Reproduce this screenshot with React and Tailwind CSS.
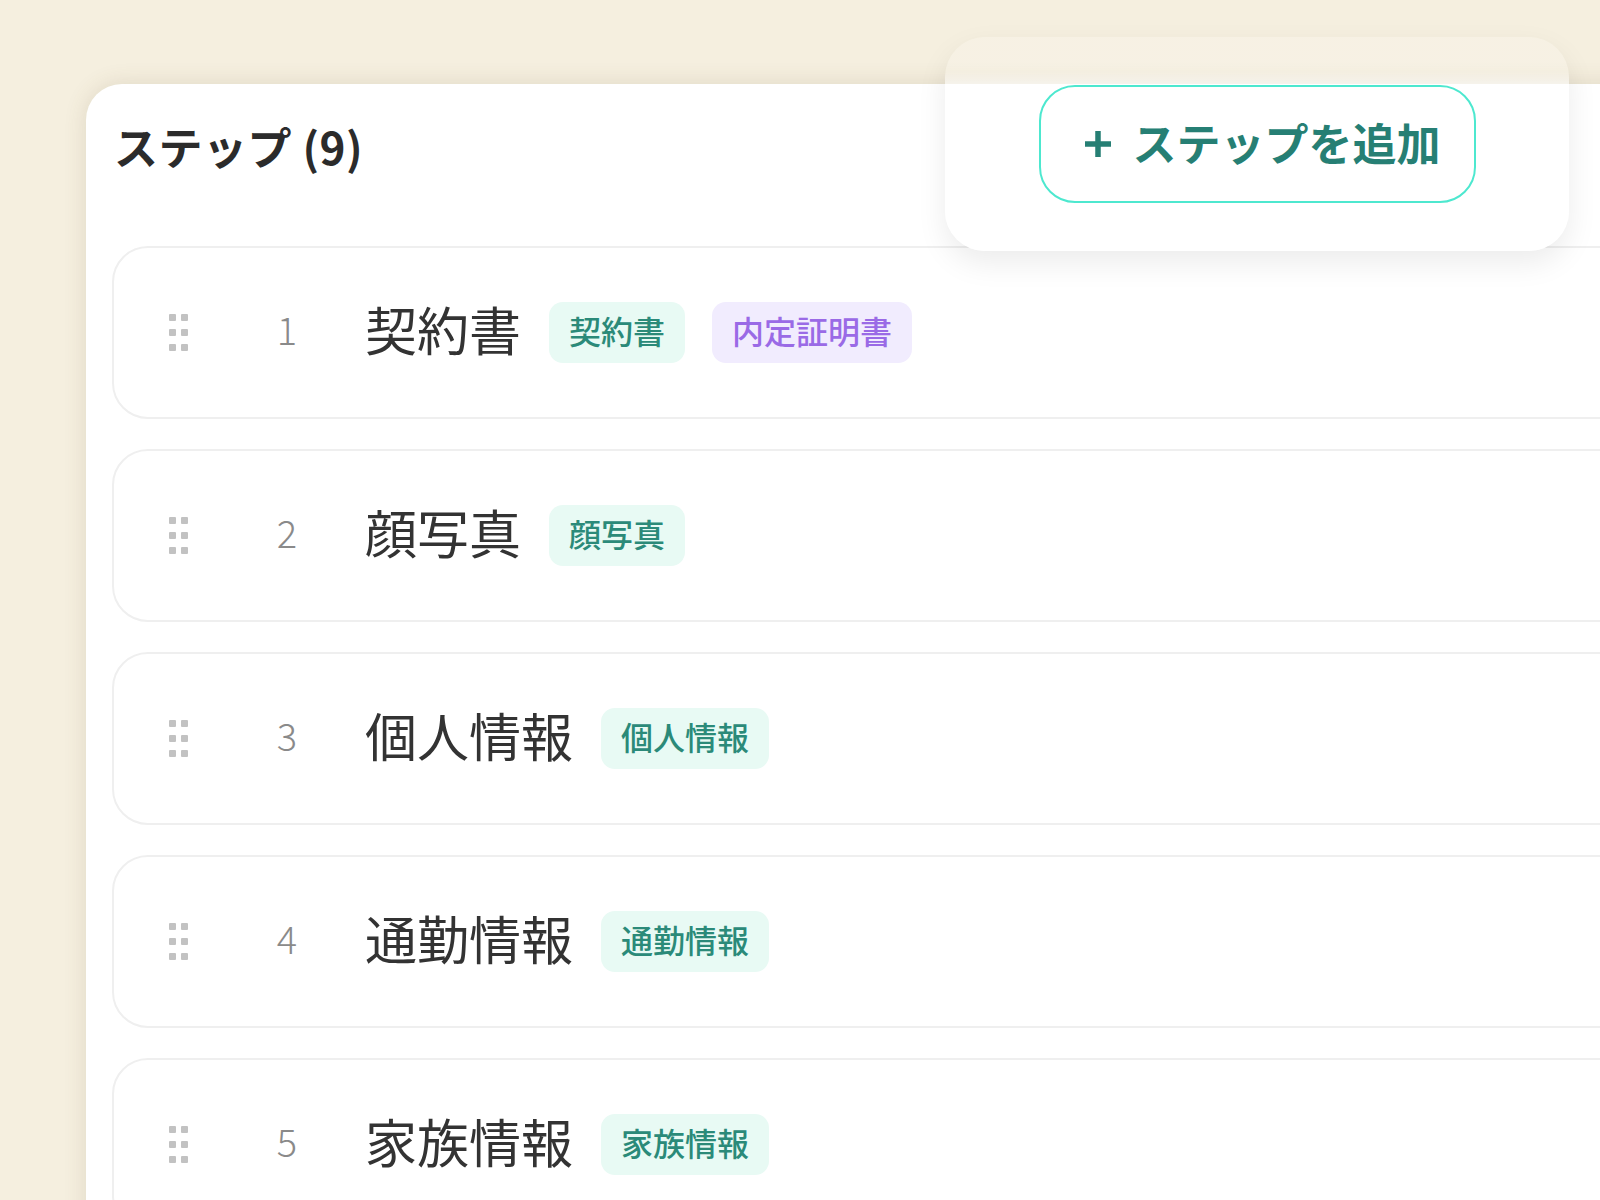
import React from "react";

const steps = [
  { no: 1, title: "契約書", tags: [{ label: "契約書", tone: "teal" }, { label: "内定証明書", tone: "purple" }] },
  { no: 2, title: "顔写真", tags: [{ label: "顔写真", tone: "teal" }] },
  { no: 3, title: "個人情報", tags: [{ label: "個人情報", tone: "teal" }] },
  { no: 4, title: "通勤情報", tags: [{ label: "通勤情報", tone: "teal" }] },
  { no: 5, title: "家族情報", tags: [{ label: "家族情報", tone: "teal" }] },
];

const font = { fontFamily: '"Noto Sans CJK JP", "Noto Sans", sans-serif' };

const DragHandle = () => (
  <div className="grid grid-cols-2 gap-x-[5px] gap-y-[8px] w-[19px]">
    {Array.from({ length: 6 }).map((_, i) => (
      <span key={i} className="w-[7px] h-[7px] rounded-[1px] bg-[#c2c2c2]" />
    ))}
  </div>
);

const Tag = ({ label, tone }) => (
  <span
    className={
      tone === "purple"
        ? "h-[61px] px-5 pb-[6px] flex items-center rounded-[14px] bg-[#f1ecfe] text-[#9a6ae6] text-[32px] font-medium"
        : "h-[61px] px-5 pb-[6px] flex items-center rounded-[14px] bg-[#e8faf4] text-[#2b8a79] text-[32px] font-medium"
    }
  >
    {label}
  </span>
);

const StepRow = ({ step }) => (
  <div className="h-[173px] shrink-0 w-[1560px] border-2 border-[#efefef] rounded-[36px] bg-white flex items-center pl-[55px]">
    <DragHandle />
    <div className="ml-[69px] w-[60px] mb-[8px] text-center text-[38px] font-light text-[#8a8a8a]">{step.no}</div>
    <div className="ml-[48px] mb-[8px] text-[52px] text-[#333333] leading-none">{step.title}</div>
    <div className="ml-[28px] flex items-center gap-[27px]">
      {step.tags.map((t) => (
        <Tag key={t.label} {...t} />
      ))}
    </div>
  </div>
);

export default function App() {
  return (
    <div className="relative w-[1600px] h-[1200px] overflow-hidden bg-[#f5efdf]" style={font}>
      <div className="ml-[86px] mt-[84px] h-[1200px] w-[1600px] bg-white rounded-tl-[36px] shadow-[0_0_22px_rgba(110,95,55,0.16)] pl-[26px] pt-[38px]">
        <h2 className="pl-[2px] text-[44px] font-bold tracking-[0.5px] text-[#2b2b2b] leading-[48px]">ステップ (9)</h2>
        <div className="mt-[76px] flex flex-col gap-[30px]">
          {steps.map((s) => (
            <StepRow key={s.no} step={s} />
          ))}
        </div>
      </div>

      <div className="absolute left-[945px] top-[37px] w-[624px] h-[214px] rounded-[40px] bg-linear-to-b from-white/15 from-[16%] to-white to-[28%] shadow-[0_12px_30px_rgba(0,0,0,0.08)] flex items-center justify-center">
        <button className="w-[437px] h-[118px] rounded-[36px] border-2 border-[#4de8cf] bg-white text-[#267f74] text-[44px] font-bold flex items-center justify-center gap-[19px] pl-[8px]">
          <svg width="32" height="32" viewBox="0 0 32 32" className="shrink-0">
            <path d="M16 3v26M3 16h26" stroke="currentColor" strokeWidth="5.5" />
          </svg>
          <span className="pb-[4px]">ステップを追加</span>
        </button>
      </div>
    </div>
  );
}
